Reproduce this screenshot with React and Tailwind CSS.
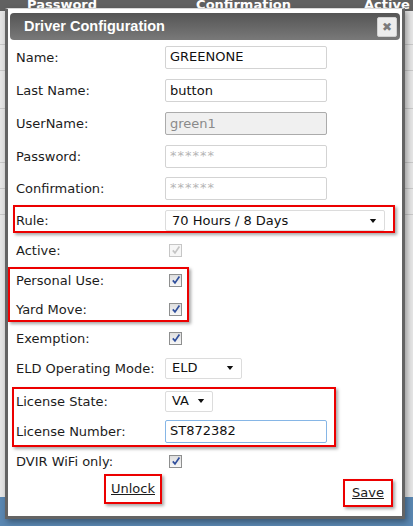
import React from "react";

const font = { fontFamily: '"DejaVu Sans", Verdana, sans-serif' };

const Check = ({ disabled }) => (
    <span
        className={
            disabled
                ? "ml-[4px] flex h-[13px] w-[13px] items-center justify-center border border-[#c6c6c6] bg-[#f6f6f6]"
                : "ml-[4px] flex h-[13px] w-[13px] items-center justify-center border border-[#8e8f8f] bg-gradient-to-b from-[#dedede] to-[#f7f7f7]"
        }
    >
        <svg viewBox="0 0 10 10" className="h-[10px] w-[10px]">
            <path
                d="M1.8 5.4 L4 7.9 L8.4 1.6"
                fill="none"
                stroke={disabled ? "#c4c4c4" : "#2f4e9c"}
                strokeWidth="1.7"
            />
        </svg>
    </span>
);

const Input = ({ value, placeholder, disabled, focused }) => (
    <div
        className={
            disabled
                ? "flex h-[23px] w-[162px] items-center rounded-[2px] border border-[#ababab] bg-[#f0f0f0] px-[4px] text-[13px] text-[#8a8a8a]"
                : focused
                ? "flex h-[23px] w-[162px] items-center rounded-[2px] border border-[#86b6e6] bg-white px-[4px] text-[13px] text-[#111]"
                : "flex h-[23px] w-[162px] items-center rounded-[2px] border border-[#d3d3d3] bg-white px-[4px] text-[13px] text-[#111]"
        }
    >
        {value ? value : <span className="tracking-[1px] text-[#b5b5b5]">{placeholder}</span>}
    </div>
);

const Select = ({ value, width }) => (
    <div
        className="flex h-[21px] items-center justify-between rounded-[2px] border border-[#dcdcdc] bg-white pl-[6px] pr-[7px] text-[13px] text-[#111]"
        style={{ width }}
    >
        <span>{value}</span>
        <svg viewBox="0 0 8 5" className="h-[4px] w-[8px]">
            <path d="M0 0 H8 L4 5 Z" fill="#111" />
        </svg>
    </div>
);

const Row = ({ label, h, children, labelW = 149 }) => (
    <div className="flex items-center" style={{ height: h }}>
        <span className="shrink-0 pt-[1px] text-[13px] text-[#1c1c1c]" style={{ width: labelW }}>
            {label}
        </span>
        {children}
    </div>
);

const redBox = "border-[2px] border-[#ec0000] shadow-[2px_2px_3px_rgba(0,0,0,0.35)]";

const App = () => {
    return (
        <div className="relative h-[526px] w-[413px] overflow-hidden bg-[#e6e6e6]" style={font}>
            {/* page behind the dialog */}
            <div className="flex h-[526px] flex-col">
                <div className="relative h-[11px] bg-[#616161]">
                    <div className="absolute left-0 top-[-5px] flex w-full text-[13px] font-bold text-white">
                        <span className="ml-[27px]">Password</span>
                        <span className="ml-[99px]">Confirmation</span>
                        <span className="ml-[73px]">Active</span>
                    </div>
                </div>
                <div className="flex flex-1 flex-col">
                    {[34, 26, 38, 54, 26, 26].map((h, i) => (
                        <div key={i} className="flex justify-end border-b border-[#c9c9c9]" style={{ height: h }}>
                            <span className="mr-[-38px] mt-[8px] text-[12px] text-[#333] underline">Select</span>
                        </div>
                    ))}
                    <div className="flex-1" />
                </div>
                <div className="h-[29px] bg-[#5a87b2]" />
            </div>

            {/* dialog */}
            <div className="absolute left-[5px] top-[8px] flex h-[511px] w-[400px] flex-col border-x-[3px] border-b-[3px] border-t border-x-[#646464] border-b-[#646464] border-t-[#d8d8d8] bg-white px-[2px] pt-[4px] shadow-[2px_3px_6px_rgba(0,0,0,0.35)]">
                <div className="flex h-[27px] shrink-0 items-center justify-between rounded-[4px] bg-gradient-to-b from-[#555] to-[#797979] pl-[14px] pr-[3px]">
                    <span className="text-[14.5px] font-bold text-white" style={{ fontFamily: '"Liberation Sans", Arial, sans-serif' }}>
                        Driver Configuration
                    </span>
                    <span className="flex h-[20px] w-[20px] items-center justify-center rounded-[2px] border border-[#d0d0d0] bg-[#ececec] text-[12px] font-bold leading-none text-[#7a7a7a]">
                        ✖
                    </span>
                </div>

                <div className="flex flex-col px-[6px]">
                    <Row label="Name:" h={34}>
                        <Input value="GREENONE" />
                    </Row>
                    <Row label="Last Name:" h={33}>
                        <Input value="button" />
                    </Row>
                    <Row label="UserName:" h={33}>
                        <Input value="green1" disabled />
                    </Row>
                    <Row label="Password:" h={32}>
                        <Input placeholder="******" />
                    </Row>
                    <Row label="Confirmation:" h={32}>
                        <Input placeholder="******" />
                    </Row>

                    <div className={`ml-[-3px] mt-[1px] h-[28px] w-[382px] pl-[1px] pt-[3px] ${redBox}`}>
                        <Row label="Rule:" h={21}>
                            <Select value="70 Hours / 8 Days" width={220} />
                        </Row>
                    </div>

                    <Row label="Active:" h={34}>
                        <Check disabled />
                    </Row>

                    <div className={`ml-[-8px] flex h-[55px] w-[181px] flex-col gap-[7px] pl-[6px] ${redBox}`}>
                        <Row label="Personal Use:" h={22}>
                            <Check />
                        </Row>
                        <Row label="Yard Move:" h={22}>
                            <Check />
                        </Row>
                    </div>

                    <Row label="Exemption:" h={32}>
                        <Check />
                    </Row>
                    <Row label="ELD Operating Mode:" h={28}>
                        <Select value="ELD" width={77} />
                    </Row>

                    <div className={`ml-[-4px] mt-[5px] flex h-[60px] w-[324px] flex-col gap-[4px] pl-[2px] ${redBox}`}>
                        <Row label="License State:" h={24}>
                            <Select value="VA" width={48} />
                        </Row>
                        <Row label="License Number:" h={28}>
                            <Input value="ST872382" focused />
                        </Row>
                    </div>

                    <Row label="DVIR WiFi only:" h={28}>
                        <Check />
                    </Row>

                    <div className="mt-[-1px] flex items-start justify-between">
                        <div className={`ml-[88px] flex h-[30px] w-[58px] items-center justify-center ${redBox}`}>
                            <span className="text-[13px] text-[#1c1c1c] underline">Unlock</span>
                        </div>
                        <div className={`mr-[1px] mt-[5px] flex h-[28px] w-[50px] items-center justify-center ${redBox}`}>
                            <span className="text-[13px] text-[#1c1c1c] underline">Save</span>
                        </div>
                    </div>
                </div>
            </div>
        </div>
    );
};

export default App;
